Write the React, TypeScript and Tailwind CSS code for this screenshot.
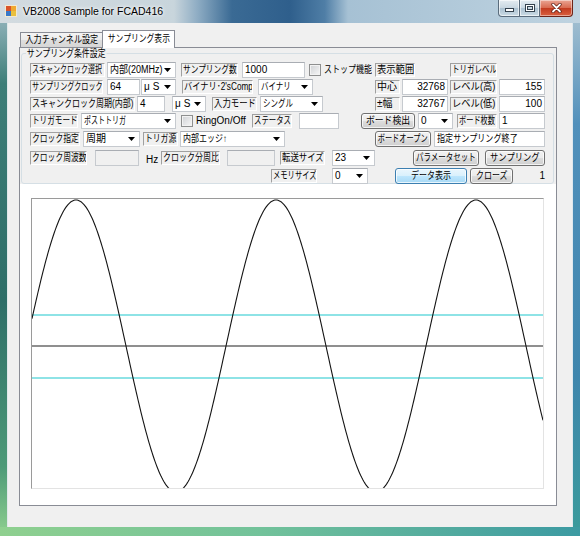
import React from "react";

type P = { c?: string; s?: string; children?: React.ReactNode };

const Arrow = () => (
  <svg width="7" height="4" viewBox="0 0 7 4" className="shrink-0">
    <path d="M0 0H7L3.5 4Z" fill="#000" />
  </svg>
);

function J({ s = "", o = "origin-left", children }: { s?: string; o?: string; children?: React.ReactNode }) {
  return <span className={`inline-block whitespace-nowrap ${o} ${s}`}>{children}</span>;
}

function Lbl({ c = "", s = "", children }: P) {
  return (
    <div
      className={`h-[14px] shrink-0 overflow-hidden whitespace-nowrap border border-t-[#a0a0a0] border-l-[#a0a0a0] border-r-white border-b-white pl-[1px] leading-[12px] ${c}`}
    >
      <J s={s}>{children}</J>
    </div>
  );
}

function Txt({ c = "", s = "", children, right = false, dis = false }: P & { right?: boolean; dis?: boolean }) {
  return (
    <div
      className={`h-[16px] shrink-0 overflow-hidden whitespace-nowrap border border-[#c6cacf] border-t-[#a9adb3] px-[2px] leading-[14px] ${
        dis ? "bg-[#f0f0f0]" : "bg-white"
      } ${right ? "text-right" : ""} ${c}`}
    >
      <J s={s}>{children}</J>
    </div>
  );
}

function Cmb({ c = "", s = "", children }: P) {
  return (
    <div
      className={`flex h-[16px] shrink-0 items-center border border-[#c6cacf] border-t-[#a9adb3] bg-white pl-[2px] pr-[4px] ${c}`}
    >
      <div className="min-w-0 flex-1 leading-[14px]">
        <J s={s}>{children}</J>
      </div>
      <Arrow />
    </div>
  );
}

function Btn({ c = "", s = "", children, def = false }: P & { def?: boolean }) {
  return (
    <div
      className={`flex h-[16px] shrink-0 items-center justify-center overflow-hidden whitespace-nowrap rounded-[3px] border leading-[14px] shadow-[inset_0_0_0_1px_rgba(255,255,255,0.75)] ${
        def
          ? "border-[#3c7fb1] bg-[linear-gradient(180deg,#eaf6fd_0%,#d9f0fc_50%,#bee6fd_51%,#a7d9f5_100%)]"
          : "border-[#707070] bg-[linear-gradient(180deg,#f2f2f2_0%,#ebebeb_50%,#dddddd_51%,#cfcfcf_100%)]"
      } ${c}`}
    >
      <J s={s} o="origin-center">
        {children}
      </J>
    </div>
  );
}

function Chk({ c = "", s = "", children }: P) {
  return (
    <div className={`flex h-[16px] shrink-0 items-center ${c}`}>
      <div className="h-[12px] w-[12px] shrink-0 border border-[#8e8f8f] bg-[linear-gradient(135deg,#cfd1d4,#f7f7f7)] shadow-[inset_0_0_0_1px_#f2f2f2]" />
      <div className="ml-[3px] min-w-0 flex-1 leading-[14px]">
        <J s={s}>{children}</J>
      </div>
    </div>
  );
}

const W = 511;
const H = 289;
const pts = Array.from({ length: W + 1 }, (_, x) => {
  const y = 147 - 146 * Math.cos((2 * Math.PI * (x - 44)) / 200);
  return `${x},${y.toFixed(2)}`;
}).join(" ");

export default function App() {
  return (
    <div className="flex h-[536px] w-[580px] flex-col overflow-hidden font-['Liberation_Sans','Noto_Sans_CJK_JP',sans-serif] text-[10px] text-black">
      {/* Title bar */}
      <div className="flex h-[23px] shrink-0 items-start bg-[linear-gradient(90deg,#d3dbe0_0%,#c8d5dc_30%,#8fadc4_34%,#3a6a94_40%,#2f5f8c_50%,#4f7ea6_56%,#a6c1d4_60%,#bfd3e0_100%)]">
        <svg width="12" height="12" viewBox="0 0 12 12" className="ml-[5px] mt-[5px] shrink-0">
          <rect x="0" y="0" width="12" height="12" fill="#f4e9d0" />
          <rect x="1" y="1" width="5" height="5" fill="#d9532a" />
          <rect x="6" y="1" width="5" height="5" fill="#f0a830" />
          <rect x="1" y="6" width="5" height="5" fill="#3a78c8" />
          <rect x="6" y="6" width="5" height="5" fill="#e8c040" />
        </svg>
        <span className="ml-[6px] mt-[5px] whitespace-nowrap font-['Liberation_Sans',sans-serif] text-[10.5px] leading-[13px] [text-shadow:0_0_5px_#fff,0_0_3px_#fff]">
          VB2008 Sample for FCAD416
        </span>
        <div className="ml-auto mr-[7px] flex h-[17px]">
          <div className="flex w-[22px] items-end justify-center rounded-bl-[4px] border border-t-0 border-[#5a6c7c] bg-[linear-gradient(180deg,#e4ecf1_0%,#c8d7e1_50%,#abc1d0_51%,#cbdbe5_100%)] pb-[4px] shadow-[inset_0_0_0_1px_rgba(255,255,255,0.6)]">
            <div className="h-[4px] w-[9px] border border-[#34424e] bg-white" />
          </div>
          <div className="flex w-[20px] items-center justify-center border border-l-0 border-t-0 border-[#5a6c7c] bg-[linear-gradient(180deg,#e4ecf1_0%,#c8d7e1_50%,#abc1d0_51%,#cbdbe5_100%)] shadow-[inset_0_0_0_1px_rgba(255,255,255,0.6)]">
            <div className="h-[8px] w-[10px] border border-[#34424e] bg-white p-[1px]">
              <div className="h-full w-full border border-[#34424e] bg-[#c8d7e1]" />
            </div>
          </div>
          <div className="flex w-[33px] items-center justify-center rounded-br-[4px] border border-l-0 border-t-0 border-[#6e2418] bg-[linear-gradient(180deg,#eaa594_0%,#d8694f_50%,#c23a1f_51%,#d9603f_100%)] shadow-[inset_0_0_0_1px_rgba(255,255,255,0.45)]">
            <svg width="11" height="10" viewBox="0 0 11 10">
              <path d="M2 1.5L9 8.5M9 1.5L2 8.5" stroke="#5a1a10" strokeWidth="3.2" strokeLinecap="round" />
              <path d="M2 1.5L9 8.5M9 1.5L2 8.5" stroke="#ffffff" strokeWidth="1.8" strokeLinecap="round" />
            </svg>
          </div>
        </div>
      </div>

      {/* Middle */}
      <div className="flex h-[504px] shrink-0">
        <div className="w-[8px] shrink-0 border-r border-[#dfe8ea] bg-[linear-gradient(180deg,#8aaeb5_0%,#3d7e78_12%,#2e6e68_55%,#4d9a78_88%,#86c98c_100%)]" />
        <div className="w-[564px] shrink-0 bg-[#f0f0f0] pl-[11px] pt-[7px]">
          <div className="w-[538px]">
            {/* Tabs */}
            <div className="flex h-[17px] items-end pl-[1px]">
              <div className="flex h-[15px] w-[83px] items-center justify-center overflow-hidden whitespace-nowrap border border-b-0 border-[#898c95] bg-[linear-gradient(180deg,#f4f4f4_0%,#ebebeb_50%,#dedede_51%,#d6d6d6_100%)] leading-[12px]">
                <J s="scale-x-[0.81]" o="origin-center">
                  入力チャンネル設定
                </J>
              </div>
              <div className="relative z-10 -mb-px -ml-px flex h-[18px] w-[73px] items-center justify-center overflow-hidden whitespace-nowrap border border-b-0 border-[#898c95] bg-white pb-[1px] leading-[12px]">
                <J s="scale-x-[0.78]" o="origin-center">
                  サンプリング表示
                </J>
              </div>
            </div>
            {/* Panel */}
            <div className="h-[459px] border border-[#898c95] bg-[#f0f0f0]">
              {/* Group box */}
              <div className="relative ml-[1px] h-[136px] w-[533px] pt-[5px]">
                <div className="h-[131px] rounded-[3px] border border-[#d5dfe5] pl-[8px] pt-[8px]">
                  {/* Row 1 */}
                  <div className="flex h-[16px] items-center">
                    <Lbl c="w-[75px]" s="scale-x-[0.7]">スキャンクロック選択</Lbl>
                    <Cmb c="ml-[2px] w-[69px]" s="scale-x-[0.9]">内部(20MHz)</Cmb>
                    <Lbl c="ml-[5px] w-[57px]" s="scale-x-[0.77]">サンプリング数</Lbl>
                    <Txt c="ml-[4px] w-[63px]">1000</Txt>
                    <Chk c="ml-[4px] w-[61px]" s="scale-x-[0.8]">ストップ機能</Chk>
                    <Lbl c="ml-[5px] w-[40px]" s="scale-x-[0.93]">表示範囲</Lbl>
                    <Lbl c="ml-[35px] w-[47px]" s="scale-x-[0.75]">トリガレベル</Lbl>
                  </div>
                  {/* Row 2 */}
                  <div className="mt-[1px] flex h-[16px] items-center">
                    <Lbl c="w-[73px]" s="scale-x-[0.71]">サンプリングクロック</Lbl>
                    <Txt c="ml-[4px] w-[33px]">64</Txt>
                    <Cmb c="ml-[1px] w-[35px]">
                      <span className="tracking-[3px]">μS</span>
                    </Cmb>
                    <Lbl c="ml-[6px] w-[71px]" s="scale-x-[0.82]">バイナリ･2&apos;sComp</Lbl>
                    <Cmb c="ml-[5px] w-[55px]" s="scale-x-[0.75]">バイナリ</Cmb>
                    <Lbl c="ml-[62px] w-[25px]">中心</Lbl>
                    <Txt c="ml-[2px] w-[46px]" right>
                      32768
                    </Txt>
                    <Lbl c="ml-[2px] w-[47px]" s="scale-x-[0.93]">レベル(高)</Lbl>
                    <Txt c="ml-[2px] w-[46px]" right>
                      155
                    </Txt>
                  </div>
                  {/* Row 3 */}
                  <div className="mt-[1px] flex h-[16px] items-center">
                    <Lbl c="w-[105px]" s="scale-x-[0.8]">スキャンクロック周期(内部)</Lbl>
                    <Txt c="ml-[2px] w-[28px]">4</Txt>
                    <Cmb c="ml-[7px] w-[34px]">
                      <span className="tracking-[3px]">μS</span>
                    </Cmb>
                    <Lbl c="ml-[6px] w-[45px]" s="scale-x-[0.84]">入力モード</Lbl>
                    <Cmb c="ml-[3px] w-[63px]" s="scale-x-[0.75]">シングル</Cmb>
                    <Lbl c="ml-[52px] w-[25px]">±幅</Lbl>
                    <Txt c="ml-[2px] w-[46px]" right>
                      32767
                    </Txt>
                    <Lbl c="ml-[2px] w-[47px]" s="scale-x-[0.93]">レベル(低)</Lbl>
                    <Txt c="ml-[2px] w-[46px]" right>
                      100
                    </Txt>
                  </div>
                  {/* Row 4 */}
                  <div className="mt-[1px] flex h-[16px] items-center">
                    <Lbl c="w-[48px]" s="scale-x-[0.76]">トリガモード</Lbl>
                    <Cmb c="ml-[3px] w-[95px]" s="scale-x-[0.7]">ポストトリガ</Cmb>
                    <Chk c="ml-[5px] w-[61px]">RingOn/Off</Chk>
                    <Lbl c="ml-[10px] w-[40px]" s="scale-x-[0.74]">ステータス</Lbl>
                    <Txt c="ml-[7px] w-[40px]" />
                    <Btn c="ml-[22px] w-[54px]" s="scale-x-[0.88]">ボード検出</Btn>
                    <Cmb c="ml-[3px] w-[35px]">0</Cmb>
                    <Lbl c="ml-[4px] w-[40px]" s="scale-x-[0.72]">ボード枚数</Lbl>
                    <Txt c="ml-[2px] w-[46px]">1</Txt>
                  </div>
                  {/* Row 5 */}
                  <div className="mt-[2px] flex h-[16px] items-center">
                    <Lbl c="w-[50px]" s="scale-x-[0.78]">クロック指定</Lbl>
                    <Cmb c="ml-[3px] w-[57px]">周期</Cmb>
                    <Lbl c="ml-[3px] w-[35px]" s="scale-x-[0.78]">トリガ源</Lbl>
                    <Cmb c="ml-[2px] w-[105px]" s="scale-x-[0.8]">内部エッジ↑</Cmb>
                    <Btn c="ml-[90px] w-[56px]" s="scale-x-[0.72]">ボードオープン</Btn>
                    <Txt c="ml-[3px] w-[111px]" s="scale-x-[0.81]">指定サンプリング終了</Txt>
                  </div>
                  {/* Row 6 */}
                  <div className="mt-[3px] flex h-[16px] items-center">
                    <Lbl c="w-[57px]" s="scale-x-[0.78]">クロック周波数</Lbl>
                    <Txt c="ml-[8px] w-[44px]" dis />
                    <span className="ml-[7px] w-[12px] shrink-0 self-end leading-[12px]">Hz</span>
                    <Lbl c="ml-[3px] w-[59px]" s="scale-x-[0.8]">クロック分周比</Lbl>
                    <Txt c="ml-[7px] w-[48px]" dis />
                    <Lbl c="ml-[5px] w-[45px]" s="scale-x-[0.84]">転送サイズ</Lbl>
                    <Cmb c="ml-[7px] w-[43px]">23</Cmb>
                    <Btn c="ml-[38px] w-[66px]" s="scale-x-[0.75]">パラメータセット</Btn>
                    <Btn c="ml-[6px] w-[60px]" s="scale-x-[0.83]">サンプリング</Btn>
                  </div>
                  {/* Row 7 */}
                  <div className="mt-[2px] flex h-[15px] items-center">
                    <Lbl c="ml-[241px] w-[46px]" s="scale-x-[0.73]">メモリサイズ</Lbl>
                    <Cmb c="ml-[15px] w-[36px]">0</Cmb>
                    <Btn c="ml-[27px] w-[72px]" s="scale-x-[0.8]" def>
                      データ表示
                    </Btn>
                    <Btn c="ml-[3px] w-[43px]" s="scale-x-[0.8]">クローズ</Btn>
                    <span className="w-[32px] shrink-0 text-right leading-[12px]">1</span>
                  </div>
                </div>
                <span className="absolute left-[5px] top-0 inline-block origin-left scale-x-[0.79] whitespace-nowrap bg-[#f0f0f0] px-[1px] leading-[11px]">
                  サンプリング条件設定
                </span>
              </div>
              {/* Chart area */}
              <div className="h-[321px] bg-white pl-[11px] pt-[14px]">
                <div className="h-[291px] w-[513px] border border-t-[#9a9a9a] border-l-[#9a9a9a] border-r-[#e3e3e3] border-b-[#e3e3e3] bg-white">
                  <svg width={W} height={H} viewBox={`0 0 ${W} ${H}`} className="block">
                    <line x1="0" x2={W} y1="116" y2="116" stroke="#8ee3e6" strokeWidth="2" />
                    <line x1="0" x2={W} y1="179" y2="179" stroke="#8ee3e6" strokeWidth="2" />
                    <line x1="0" x2={W} y1="147" y2="147" stroke="#6a6a6a" strokeWidth="1.5" />
                    <polyline points={pts} fill="none" stroke="#141414" strokeWidth="1.1" />
                  </svg>
                </div>
              </div>
            </div>
          </div>
        </div>
        <div className="w-[8px] shrink-0 border-l border-[#dfe8ee] bg-[linear-gradient(180deg,#9ebccf_0%,#5190bb_20%,#3f86ad_70%,#3a9a9c_100%)]" />
      </div>
      {/* Bottom frame */}
      <div className="h-[9px] shrink-0 bg-[linear-gradient(90deg,#8fd08f_0%,#72c29a_45%,#3c9aa2_100%)]" />
    </div>
  );
}
